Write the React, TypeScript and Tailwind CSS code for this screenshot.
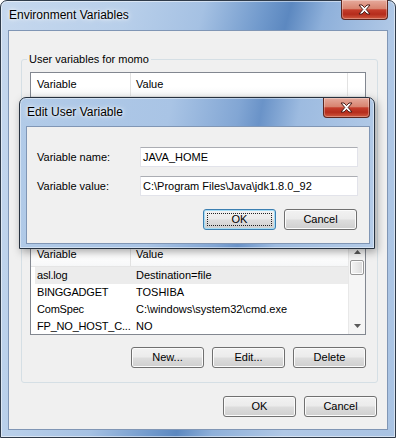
import React from 'react';

const userRows: [string, string][] = [];

const systemRows: [string, string][] = [
  ['asl.log', 'Destination=file'],
  ['BINGGADGET', 'TOSHIBA'],
  ['ComSpec', 'C:\\windows\\system32\\cmd.exe'],
  ['FP_NO_HOST_C...', 'NO'],
];

function CloseGlyph() {
  return (
    <svg width="13" height="11" viewBox="-1 -1 13 11">
      <polygon
        points="0,0 3,0 5.5,2.6 8,0 11,0 7.2,4.5 11,9 8,9 5.5,6.4 3,9 0,9 3.8,4.5"
        fill="#ffffff"
        stroke="#4a1d18"
        strokeWidth="1"
        strokeLinejoin="round"
      />
    </svg>
  );
}

function CloseButton() {
  return (
    <div className="flex h-[20px] w-[47px] items-center justify-center rounded-b-[4px] border border-t-0 border-[#5b2620] bg-[linear-gradient(#e6aa9c_0%,#d88470_45%,#c43d2b_52%,#b52c1c_75%,#cf5a40_100%)] shadow-[inset_0_0_0_1px_rgba(255,255,255,0.3)]">
      <CloseGlyph />
    </div>
  );
}

function Button({ label, focused = false }: { label: string; focused?: boolean }) {
  return (
    <div
      className={`relative flex h-[21px] w-[73px] items-center justify-center rounded-[3px] border bg-[linear-gradient(#f2f2f2_0%,#ebebeb_48%,#dddddd_52%,#cfcfcf_100%)] ${
        focused
          ? 'border-[#3c7fb1] shadow-[inset_0_0_0_1px_#a6def6]'
          : 'border-[#707070] shadow-[inset_0_0_0_1px_#fbfbfb]'
      }`}
    >
      {focused && <span className="pointer-events-none absolute inset-[3px] border border-dotted border-[#222222]" />}
      {label}
    </div>
  );
}

function ArrowUp() {
  return (
    <svg width="7" height="4" viewBox="0 0 7 4">
      <polygon points="0,4 3.5,0 7,4" fill="#5a5a5a" />
    </svg>
  );
}

function ArrowDown() {
  return (
    <svg width="7" height="4" viewBox="0 0 7 4">
      <polygon points="0,0 7,0 3.5,4" fill="#5a5a5a" />
    </svg>
  );
}

function ListHeader({ withScroll }: { withScroll: boolean }) {
  return (
    <div className="flex h-[24px] shrink-0 items-center border-b border-[#e5e5e5] bg-[linear-gradient(#ffffff_0%,#ffffff_60%,#f6f7f8_100%)]">
      <div className="flex h-full w-[100px] items-center border-r border-[#e2e2e2] pl-[6px]">Variable</div>
      <div className={`flex h-full items-center pl-[5px] ${withScroll ? 'flex-1' : 'w-[217px] border-r border-[#e2e2e2]'}`}>Value</div>
    </div>
  );
}

function ListView({ rows, height, scroll }: { rows: [string, string][]; height: string; scroll: boolean }) {
  return (
    <div className={`flex ${height} overflow-hidden border border-[#828790] bg-white`}>
      <div className="flex min-w-0 flex-1 flex-col">
        <ListHeader withScroll={scroll} />
        {rows.map(([name, value], i) => (
          <div key={name} className={`ml-[4px] flex h-[17px] shrink-0 items-center ${i === 0 ? 'bg-[#ececec]' : ''}`}>
            <div className="w-[96px] overflow-hidden whitespace-nowrap pl-[2px] tracking-[-0.2px]">{name}</div>
            <div className="flex-1 whitespace-nowrap pl-[5px]">{value}</div>
          </div>
        ))}
      </div>
      {scroll && (
        <div className="flex w-[17px] shrink-0 flex-col border-l border-[#e8e8e8] bg-[#f5f5f5]">
          <div className="flex h-[17px] items-center justify-center">
            <ArrowUp />
          </div>
          <div className="mx-[1px] h-[15px] rounded-[2px] border border-[#979797] bg-[linear-gradient(90deg,#f4f4f4,#e8e8e8_50%,#dadada)] shadow-[inset_0_0_0_1px_#fdfdfd]" />
          <div className="flex-1" />
          <div className="flex h-[17px] items-center justify-center">
            <ArrowDown />
          </div>
        </div>
      )}
    </div>
  );
}

export default function App() {
  return (
    <div className="relative h-[438px] w-[396px] font-['Liberation_Sans',Arial,sans-serif] text-[11px] leading-[13px] text-black">
      {/* Environment Variables window */}
      <div className="flex h-full w-full flex-col rounded-t-[7px] border border-[#2f3b4a] bg-[linear-gradient(105deg,#c6d8ee_0%,#b8cfea_25%,#a5c1e3_40%,#7099cc_52%,#5c88c0_57%,#8eb0da_64%,#b0c8e6_78%,#a9c3e3_100%)] px-[7px] pb-[7px] shadow-[inset_0_0_0_1px_rgba(255,255,255,0.5)]">
        <div className="flex h-[29px] shrink-0 items-start justify-between">
          <span className="pl-[1px] pt-[7px] text-[12px] leading-[14px] [text-shadow:0_0_6px_#ffffff,0_0_3px_#ffffff]">
            Environment Variables
          </span>
          <div className="-mt-px">
            <CloseButton />
          </div>
        </div>

        <div className="flex flex-1 flex-col border border-[#8096b5] bg-[#f0f0f0]">
          {/* group box */}
          <div className="relative ml-[12px] mr-[9px] mt-[28px] flex h-[324px] flex-col rounded-[3px] border border-[#d5dfe5] pb-[14px] pl-[8px] pr-[11px] pt-[12px]">
            <span className="absolute -top-[7px] left-[5px] bg-[#f0f0f0] px-[2px]">User variables for momo</span>
            <ListView rows={userRows} height="h-[100px]" scroll={false} />
            <div className="mt-[70px]">
              <ListView rows={systemRows} height="h-[93px]" scroll />
            </div>
            <div className="mt-[12px] flex justify-end gap-[8px]">
              <Button label="New..." />
              <Button label="Edit..." />
              <Button label="Delete" />
            </div>
          </div>

          <div className="mt-[13px] flex justify-end gap-[8px] pr-[10px]">
            <Button label="OK" />
            <Button label="Cancel" />
          </div>
        </div>
      </div>

      {/* Edit User Variable dialog */}
      <div className="absolute left-[19px] top-[97px] flex h-[152px] w-[356px] flex-col rounded-t-[7px] border border-[#26313f] bg-[linear-gradient(100deg,#b2cbe8_0%,#a9c4e5_40%,#82a6d4_58%,#6a93c8_64%,#9dbbe0_74%,#b5cce8_100%)] pb-[4px] pl-[6px] pr-[4px] shadow-[inset_0_0_0_1px_rgba(255,255,255,0.45),2px_3px_8px_rgba(0,0,0,0.35)]">
        <div className="flex h-[28px] shrink-0 items-start justify-between">
          <span className="pl-[1px] pt-[7px] text-[12px] leading-[14px] [text-shadow:0_0_6px_#ffffff,0_0_3px_#ffffff]">
            Edit User Variable
          </span>
          <CloseButton />
        </div>
        <div className="flex flex-1 flex-col border border-[#8096b5] bg-[#f0f0f0]">
          <div className="mt-[20px] grid grid-cols-[103px_1fr] gap-y-[9px] pl-[10px] pr-[11px]">
            <div className="flex h-[20px] items-center">Variable name:</div>
            <div className="flex h-[20px] items-center border border-[#e2e3ea] border-t-[#abadb3] bg-white px-[2px]">JAVA_HOME</div>
            <div className="flex h-[20px] items-center">Variable value:</div>
            <div className="flex h-[20px] items-center border border-[#e2e3ea] border-t-[#abadb3] bg-white px-[2px]">
              C:\Program Files\Java\jdk1.8.0_92
            </div>
          </div>
          <div className="mt-[13px] flex justify-end gap-[8px] pr-[12px]">
            <Button label="OK" focused />
            <Button label="Cancel" />
          </div>
        </div>
      </div>
    </div>
  );
}
